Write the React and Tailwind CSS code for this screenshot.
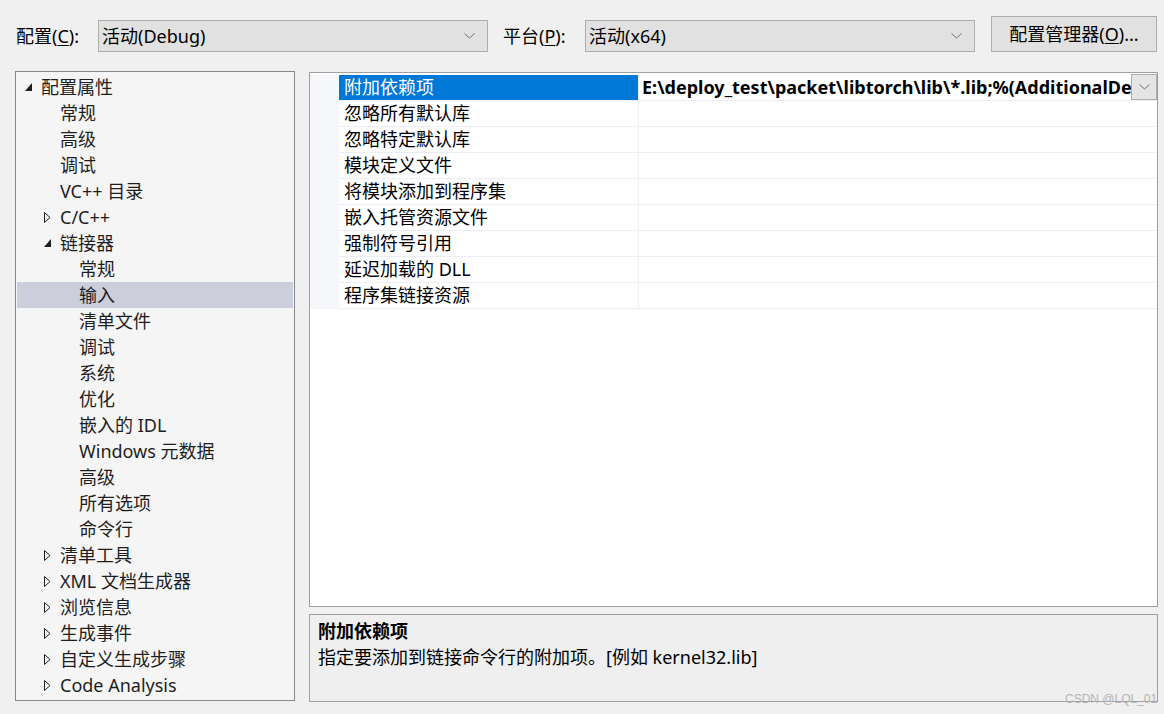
import React from 'react';

const FONT = { fontFamily: '"Noto Sans", "Noto Sans CJK SC", sans-serif' };

const tree = [
    { t: '配置属性', l: 0, e: 'open' },
    { t: '常规', l: 1 },
    { t: '高级', l: 1 },
    { t: '调试', l: 1 },
    { t: 'VC++ 目录', l: 1 },
    { t: 'C/C++', l: 1, e: 'closed' },
    { t: '链接器', l: 1, e: 'open' },
    { t: '常规', l: 2 },
    { t: '输入', l: 2, sel: true },
    { t: '清单文件', l: 2 },
    { t: '调试', l: 2 },
    { t: '系统', l: 2 },
    { t: '优化', l: 2 },
    { t: '嵌入的 IDL', l: 2 },
    { t: 'Windows 元数据', l: 2 },
    { t: '高级', l: 2 },
    { t: '所有选项', l: 2 },
    { t: '命令行', l: 2 },
    { t: '清单工具', l: 1, e: 'closed' },
    { t: 'XML 文档生成器', l: 1, e: 'closed' },
    { t: '浏览信息', l: 1, e: 'closed' },
    { t: '生成事件', l: 1, e: 'closed' },
    { t: '自定义生成步骤', l: 1, e: 'closed' },
    { t: 'Code Analysis', l: 1, e: 'closed' },
];

const props = [
    '附加依赖项',
    '忽略所有默认库',
    '忽略特定默认库',
    '模块定义文件',
    '将模块添加到程序集',
    '嵌入托管资源文件',
    '强制符号引用',
    '延迟加载的 DLL',
    '程序集链接资源',
];

const indent = ['pl-[8px]', 'pl-[27px]', 'pl-[46px]'];

function Chevron({ className = '' }) {
    return (
        <svg width="11" height="6" viewBox="0 0 11 6" className={className}>
            <polyline points="0.5,0.5 5.5,5 10.5,0.5" fill="none" stroke="#707070" strokeWidth="1" />
        </svg>
    );
}

function Expander({ kind }) {
    if (kind === 'open') {
        return (
            <svg width="7" height="8" viewBox="0 0 7 8">
                <polygon points="7,0 7,8 0,8" fill="#1e1e1e" />
            </svg>
        );
    }
    if (kind === 'closed') {
        return (
            <svg width="7" height="11" viewBox="0 0 7 11">
                <polygon points="0.5,0.5 6,5.5 0.5,10.5" fill="none" stroke="#1e1e1e" strokeWidth="1" />
            </svg>
        );
    }
    return null;
}

function Combo({ text }) {
    return (
        <div className="w-[390px] h-[32px] shrink-0 bg-[#e1e1e1] border border-[#adadad] flex items-center justify-between pl-[3px] pr-[12px]">
            <span>{text}</span>
            <Chevron />
        </div>
    );
}

export default function App() {
    return (
        <div className="w-[1164px] h-[714px] bg-[#f0f0f0] text-[18px] text-black overflow-hidden relative" style={FONT}>
            {/* barra superior */}
            <div className="flex items-end h-[36px] mt-[16px] pl-[16px]">
                <div className="w-[82px] shrink-0 h-[32px] flex items-center">
                    配置(<span className="underline underline-offset-2">C</span>):
                </div>
                <Combo text="活动(Debug)" />
                <div className="w-[82px] shrink-0 ml-[15px] h-[32px] flex items-center">
                    平台(<span className="underline underline-offset-2">P</span>):
                </div>
                <Combo text="活动(x64)" />
                <div className="ml-[16px] w-[166px] shrink-0 h-[36px] bg-[#e1e1e1] border border-[#adadad] flex items-center justify-center">
                    配置管理器(<span className="underline underline-offset-2">O</span>)...
                </div>
            </div>

            <div className="flex mt-[19px] pl-[15px]">
                {/* arbol */}
                <div className="w-[280px] shrink-0 h-[630px] bg-[#f5f5f5] border border-[#828790] px-px pt-[2px]">
                    {tree.map((n, i) => (
                        <div
                            key={i}
                            className={`h-[26px] flex items-center text-[#1e1e1e] ${indent[n.l]} ${n.sel ? 'bg-[#cccedb]' : ''}`}
                        >
                            <div className="w-[16px] shrink-0 flex items-center">
                                <Expander kind={n.e} />
                            </div>
                            <span className="whitespace-nowrap">{n.t}</span>
                        </div>
                    ))}
                </div>

                {/* panel derecho */}
                <div className="ml-[14px] w-[849px] shrink-0 flex flex-col">
                    <div className="mt-px h-[535px] bg-white border border-[#a0a0a0] pt-[2px] flex">
                        <div className="w-[29px] shrink-0 h-[234px] bg-[#f5f7fb]"></div>
                        <div className="flex-1 min-w-0 flex flex-col">
                            {props.map((p, i) => (
                                <div key={i} className="h-[26px] flex border-b border-[#ededf5] relative">
                                    <div className={`w-[299px] shrink-0 pl-[5px] flex items-center ${i === 0 ? 'bg-[#0078d7] text-white' : ''}`}>
                                        {p}
                                    </div>
                                    <div className="w-px shrink-0 bg-[#eef0f5]"></div>
                                    <div className="flex-1 min-w-0 pl-[3px] pr-[26px] flex items-center overflow-hidden whitespace-nowrap font-bold">
                                        {i === 0 ? 'E:\\deploy_test\\packet\\libtorch\\lib\\*.lib;%(AdditionalDe' : ''}
                                    </div>
                                    {i === 0 && (
                                        <div className="absolute right-0 top-[-1px] w-[26px] h-[26px] bg-[#e5e5e5] border border-[#adadad] flex items-center justify-center">
                                            <Chevron />
                                        </div>
                                    )}
                                </div>
                            ))}
                        </div>
                    </div>

                    {/* descripcion */}
                    <div className="mt-[7px] h-[88px] bg-[#efefef] border border-[#a0a0a0] pl-[8px] pt-[3px]">
                        <div className="h-[26px] flex items-center font-bold">附加依赖项</div>
                        <div className="h-[26px] flex items-center">指定要添加到链接命令行的附加项。[例如 kernel32.lib]</div>
                    </div>
                </div>
            </div>

            <div
                className="absolute left-[1065px] top-[690px] text-[12px] text-[#b4b4b4] whitespace-nowrap"
                style={{ fontFamily: '"Liberation Sans", Arial, sans-serif' }}
            >
                CSDN @LQL_01
            </div>
        </div>
    );
}
